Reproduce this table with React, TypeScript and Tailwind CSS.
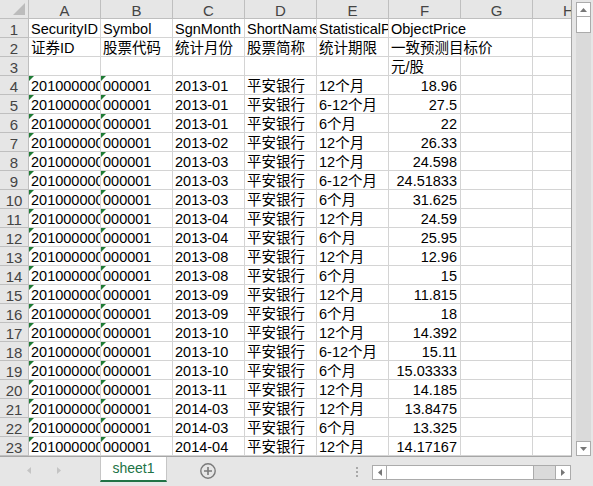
import { FC } from "react";

type Row = {
  a?: string;
  b?: string;
  c?: string;
  d?: string;
  e?: string;
  f?: string;
  num?: boolean;
  spill?: boolean;
  flag?: boolean;
};

const cols = ["A", "B", "C", "D", "E", "F", "G", "H"];

const data: [string, string, string][] = [
  ["2013-01", "12个月", "18.96"],
  ["2013-01", "6-12个月", "27.5"],
  ["2013-01", "6个月", "22"],
  ["2013-02", "12个月", "26.33"],
  ["2013-03", "12个月", "24.598"],
  ["2013-03", "6-12个月", "24.51833"],
  ["2013-03", "6个月", "31.625"],
  ["2013-04", "12个月", "24.59"],
  ["2013-04", "6个月", "25.95"],
  ["2013-08", "12个月", "12.96"],
  ["2013-08", "6个月", "15"],
  ["2013-09", "12个月", "11.815"],
  ["2013-09", "6个月", "18"],
  ["2013-10", "12个月", "14.392"],
  ["2013-10", "6-12个月", "15.11"],
  ["2013-10", "6个月", "15.03333"],
  ["2013-11", "12个月", "14.185"],
  ["2014-03", "12个月", "13.8475"],
  ["2014-03", "6个月", "13.325"],
  ["2014-04", "12个月", "14.17167"],
];

const rows: Row[] = [
  {
    a: "SecurityID",
    b: "Symbol",
    c: "SgnMonth",
    d: "ShortName",
    e: "StatisticalPeriod",
    f: "ObjectPrice",
    spill: true,
  },
  {
    a: "证券ID",
    b: "股票代码",
    c: "统计月份",
    d: "股票简称",
    e: "统计期限",
    f: "一致预测目标价",
    spill: true,
  },
  { f: "元/股" },
  ...data.map(([c, e, f]) => ({
    a: "201000000001",
    b: "000001",
    c,
    d: "平安银行",
    e,
    f,
    num: true,
    flag: true,
  })),
];

const font = {
  fontFamily: '"Liberation Sans", "Noto Sans CJK SC", sans-serif',
};

// green "number stored as text" marker
const Flag: FC = () => (
  <span className="absolute top-0 left-0 w-0 h-0 border-t-[5px] border-r-[5px] border-t-[#1e7b34] border-r-transparent" />
);

const Cell: FC<{
  text?: string;
  right?: boolean;
  spill?: boolean;
  flag?: boolean;
}> = ({ text, right, spill, flag }) => (
  <div
    className={
      spill
        ? "relative z-10 w-[72px] shrink-0 h-full border-b border-[#d4d4d4] px-[2px] pt-[4px] flex items-center whitespace-nowrap overflow-visible"
        : right
        ? "relative w-[72px] shrink-0 h-full border-r border-b border-[#d4d4d4] px-[3px] pt-[4px] flex items-center justify-end whitespace-nowrap overflow-hidden"
        : "relative w-[72px] shrink-0 h-full border-r border-b border-[#d4d4d4] px-[2px] pt-[4px] flex items-center whitespace-nowrap overflow-hidden"
    }
  >
    {flag && <Flag />}
    {text}
  </div>
);

const App: FC = () => {
  return (
    <div
      className="w-[593px] h-[486px] bg-[#e6e6e6] flex flex-col overflow-hidden text-[14.5px] text-black"
      style={font}
    >
      <div className="flex h-[457px]">
        {/* sheet grid */}
        <div className="w-[572px] h-[457px] bg-white border-r border-b border-[#a6a6a6] overflow-hidden">
          <div className="flex h-[19px] bg-[#e6e6e6] text-[15px] text-[#444]">
            <div className="relative w-[29px] shrink-0 h-full border-r border-b border-[#bfbfbf]">
              <svg
                className="absolute right-[3px] bottom-[3px]"
                width="12"
                height="12"
                viewBox="0 0 12 12"
              >
                <polygon points="12,0 12,12 0,12" fill="#bcbcbc" />
              </svg>
            </div>
            {cols.map((c) => (
              <div
                key={c}
                className="w-[72px] shrink-0 h-full border-r border-b border-[#bfbfbf] pt-[4px] flex items-center justify-center"
              >
                {c}
              </div>
            ))}
          </div>
          {rows.map((r, i) => (
            <div key={i} className="flex h-[19px]">
              <div className="w-[29px] shrink-0 h-full bg-[#e6e6e6] border-r border-b border-[#bfbfbf] pt-[4px] flex items-center justify-center text-[15px] text-[#444]">
                {i + 1}
              </div>
              <Cell text={r.a} flag={r.flag} />
              <Cell text={r.b} flag={r.flag} />
              <Cell text={r.c} />
              <Cell text={r.d} />
              <Cell text={r.e} />
              <Cell text={r.f} right={r.num} spill={r.spill} />
              <Cell />
              <Cell />
            </div>
          ))}
        </div>

        {/* vertical scrollbar */}
        <div className="flex-1 flex flex-col items-center pt-[2px] pb-[1px] pl-[2px]">
          <div className="w-[15px] h-[15px] bg-white border border-[#ababab] flex items-center justify-center">
            <svg width="7" height="4" viewBox="0 0 7 4">
              <polygon points="0,4 7,4 3.5,0" fill="#777" />
            </svg>
          </div>
          <div className="w-[15px] h-[16px] bg-white border border-[#ababab] border-t-0" />
          <div className="w-[15px] flex-1 bg-[#dadada]" />
          <div className="w-[15px] h-[15px] bg-white border border-[#ababab] flex items-center justify-center">
            <svg width="7" height="4" viewBox="0 0 7 4">
              <polygon points="0,0 7,0 3.5,4" fill="#777" />
            </svg>
          </div>
        </div>
      </div>

      {/* sheet tabs bar */}
      <div className="flex h-[29px] items-start">
        <div className="w-[100px] h-[26px] flex items-center shrink-0">
          <svg className="ml-[27px]" width="4" height="7" viewBox="0 0 4 7">
            <polygon points="4,0 4,7 0,3.5" fill="#c4c4c4" />
          </svg>
          <svg className="ml-[26px]" width="4" height="7" viewBox="0 0 4 7">
            <polygon points="0,0 0,7 4,3.5" fill="#c4c4c4" />
          </svg>
        </div>
        <div className="w-[67px] h-[25px] shrink-0 bg-white border-x border-[#c6c6c6] border-b-2 border-b-[#217346] flex items-center justify-center text-[14px] text-[#217346]">
          sheet1
        </div>
        <svg
          className="ml-[33px] mt-[6px] shrink-0"
          width="16"
          height="16"
          viewBox="0 0 16 16"
        >
          <circle cx="8" cy="8" r="7.2" fill="none" stroke="#7a7a7a" strokeWidth="1.4" />
          <path d="M8 4v8M4 8h8" stroke="#7a7a7a" strokeWidth="1.6" />
        </svg>
        <div className="ml-[140px] mt-[10px] flex flex-col gap-[2px] shrink-0">
          <span className="w-[2px] h-[2px] bg-[#a8a8a8]" />
          <span className="w-[2px] h-[2px] bg-[#a8a8a8]" />
          <span className="w-[2px] h-[2px] bg-[#a8a8a8]" />
        </div>
        <div className="ml-[14px] mt-[8px] w-[199px] h-[15px] shrink-0 flex border border-[#ababab] bg-[#dadada]">
          <div className="w-[14px] h-full bg-white border-r border-[#ababab] flex items-center justify-center">
            <svg width="4" height="7" viewBox="0 0 4 7">
              <polygon points="4,0 4,7 0,3.5" fill="#777" />
            </svg>
          </div>
          <div className="w-[147px] h-full bg-white border-r border-[#ababab]" />
          <div className="flex-1" />
          <div className="w-[15px] h-full bg-white border-l border-[#ababab] flex items-center justify-center">
            <svg width="4" height="7" viewBox="0 0 4 7">
              <polygon points="0,0 0,7 4,3.5" fill="#777" />
            </svg>
          </div>
        </div>
      </div>
    </div>
  );
};

export default App;
